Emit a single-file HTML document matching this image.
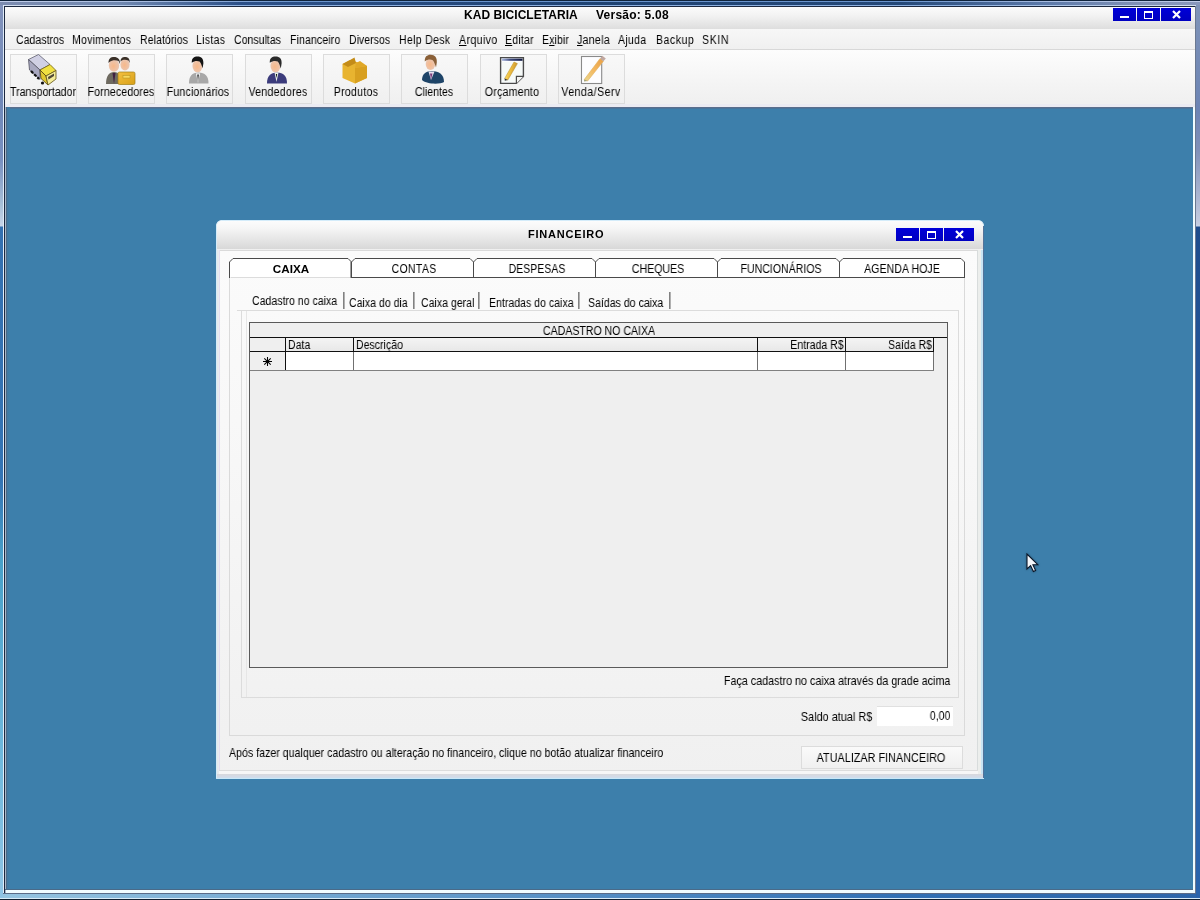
<!DOCTYPE html>
<html><head><meta charset="utf-8"><style>
html,body{margin:0;padding:0;}
body{width:1200px;height:900px;overflow:hidden;position:relative;background:#3d7fab;font-family:"Liberation Sans",sans-serif;}
.t{position:absolute;white-space:nowrap;line-height:1;will-change:transform;}
body{-webkit-font-smoothing:antialiased;}
</style></head><body>
<div style="position:absolute;left:0px;top:0px;width:3px;height:900px;background:linear-gradient(#8494bc 0px,#7088b8 100px,#7890c0 160px,#a8c0d8 205px,#c8d4e8 226px,#3470b0 227px,#3474b4 480px,#48a0c8 560px,#70b8dc 760px,#90c4e4 900px);"></div><div style="position:absolute;left:1196px;top:0px;width:4px;height:900px;background:linear-gradient(#8094b8 0px,#6c84b4 110px,#8090b8 150px,#c4cce0 224px,#c8d4e8 226px,#1e4c8c 227px,#2a5ea4 500px,#2a64ac 900px);"></div><div style="position:absolute;left:0px;top:0px;width:1200px;height:1px;background:#10243c;"></div><div style="position:absolute;left:0px;top:1px;width:1200px;height:1px;background:linear-gradient(90deg,#c0cce8 0px,#a8bce0 150px,#6a94cc 300px,#6a94cc 900px,#a8bce0 1050px,#c0cce8 1200px);"></div><div style="position:absolute;left:0px;top:2px;width:1200px;height:3px;background:linear-gradient(90deg,#7c8cb0 0px,#7088b0 120px,#2c5088 240px,#1e4272 600px,#244878 900px,#5a78a8 1040px,#8494b8 1150px,#8898bc 1200px);"></div><div style="position:absolute;left:3px;top:5px;width:1193px;height:1px;background:linear-gradient(90deg,#d4e0f0 0px,#8cb0e0 250px,#8cb0e0 950px,#d4e0f0 1200px);"></div><div style="position:absolute;left:3px;top:6px;width:1193px;height:1px;background:#1c2840;"></div><div style="position:absolute;left:3px;top:5px;width:1px;height:890px;background:#e0ecf8;"></div><div style="position:absolute;left:4px;top:6px;width:1px;height:889px;background:#1c2840;"></div><div style="position:absolute;left:1195px;top:6px;width:1px;height:889px;background:#6a7890;"></div><div style="position:absolute;left:3px;top:893px;width:1193px;height:1px;background:#5a6c88;"></div><div style="position:absolute;left:3px;top:894px;width:1193px;height:4px;background:linear-gradient(90deg,#94c4e0,#3070b4 900px,#2c66aa);"></div><div style="position:absolute;left:0px;top:898px;width:1200px;height:1px;background:#d8ecf8;"></div><div style="position:absolute;left:0px;top:899px;width:1200px;height:1px;background:#102030;"></div><div style="position:absolute;left:5px;top:7px;width:1190px;height:22px;background:linear-gradient(#fbfbfb 0%,#f2f2f2 40%,#dedede 100%);"></div><div class="t" style="left:464px;top:8.84px;font-size:12.00px;font-weight:bold;letter-spacing:0.040px;color:#000;">KAD BICICLETARIA</div><div class="t" style="left:596px;top:8.84px;font-size:12.00px;font-weight:bold;letter-spacing:0.230px;color:#000;">Versão: 5.08</div><div style="position:absolute;left:1113px;top:8px;width:23px;height:13px;background:linear-gradient(#0000d8,#0000c0);"></div><div style="position:absolute;left:1137px;top:8px;width:23px;height:13px;background:linear-gradient(#0000d8,#0000c0);"></div><div style="position:absolute;left:1161px;top:8px;width:30px;height:13px;background:linear-gradient(#0000d8,#0000c0);"></div><div style="position:absolute;left:1120px;top:16px;width:9px;height:2px;background:#fff;"></div><div style="position:absolute;left:1144px;top:11px;width:9px;height:8px;border:1px solid #fff;border-top-width:2px;box-sizing:border-box;"></div><svg style="position:absolute;left:1172px;top:10px" width="9" height="9" viewBox="0 0 9 9"><path d="M1 1L8 8M8 1L1 8" stroke="#fff" stroke-width="2.2"/></svg><div style="position:absolute;left:5px;top:29px;width:1190px;height:20px;background:linear-gradient(#f7f7f7,#f0f0f0);"></div><div style="position:absolute;left:5px;top:49px;width:1190px;height:1px;background:#d8d8d8;"></div><div class="t" style="left:15.7px;top:33.84px;font-size:12.00px;transform:scaleX(0.88);transform-origin:0 0;color:#000;">Cadastros</div><div class="t" style="left:71.7px;top:33.84px;font-size:12.00px;letter-spacing:0.250px;transform:scaleX(0.88);transform-origin:0 0;color:#000;">Movimentos</div><div class="t" style="left:139.7px;top:33.84px;font-size:12.00px;letter-spacing:0.057px;transform:scaleX(0.88);transform-origin:0 0;color:#000;">Relatórios</div><div class="t" style="left:195.7px;top:33.84px;font-size:12.00px;letter-spacing:0.341px;transform:scaleX(0.88);transform-origin:0 0;color:#000;">Listas</div><div class="t" style="left:233.7px;top:33.84px;font-size:12.00px;transform:scaleX(0.88);transform-origin:0 0;color:#000;">Consultas</div><div class="t" style="left:289.7px;top:33.84px;font-size:12.00px;letter-spacing:0.114px;transform:scaleX(0.88);transform-origin:0 0;color:#000;">Financeiro</div><div class="t" style="left:348.7px;top:33.84px;font-size:12.00px;transform:scaleX(0.88);transform-origin:0 0;color:#000;">Diversos</div><div class="t" style="left:398.7px;top:33.84px;font-size:12.00px;letter-spacing:0.341px;transform:scaleX(0.88);transform-origin:0 0;color:#000;">Help Desk</div><div class="t" style="left:458.7px;top:33.84px;font-size:12.00px;letter-spacing:0.455px;transform:scaleX(0.88);transform-origin:0 0;color:#000;"><u>A</u>rquivo</div><div class="t" style="left:504.7px;top:33.84px;font-size:12.00px;letter-spacing:0.227px;transform:scaleX(0.88);transform-origin:0 0;color:#000;"><u>E</u>ditar</div><div class="t" style="left:541.7px;top:33.84px;font-size:12.00px;letter-spacing:0.114px;transform:scaleX(0.88);transform-origin:0 0;color:#000;">E<u>x</u>ibir</div><div class="t" style="left:576.7px;top:33.84px;font-size:12.00px;letter-spacing:0.341px;transform:scaleX(0.88);transform-origin:0 0;color:#000;"><u>J</u>anela</div><div class="t" style="left:617.7px;top:33.84px;font-size:12.00px;letter-spacing:0.284px;transform:scaleX(0.88);transform-origin:0 0;color:#000;">Ajuda</div><div class="t" style="left:655.7px;top:33.84px;font-size:12.00px;letter-spacing:0.568px;transform:scaleX(0.88);transform-origin:0 0;color:#000;">Backup</div><div class="t" style="left:701.7px;top:33.84px;font-size:12.00px;letter-spacing:0.682px;transform:scaleX(0.88);transform-origin:0 0;color:#000;">SKIN</div><div style="position:absolute;left:5px;top:50px;width:1190px;height:57px;background:linear-gradient(#fdfdfd,#f4f4f4 60%,#efefef);"></div><div style="position:absolute;left:5px;top:104px;width:1190px;height:3px;background:#ebebf2;"></div><div style="position:absolute;left:5px;top:107px;width:1190px;height:1px;background:#5a6e8c;"></div><div style="position:absolute;left:5px;top:108px;width:1190px;height:1px;background:#48749a;"></div><div style="position:absolute;left:10px;top:54px;width:67px;height:50px;border:1px solid #dcdcdc;box-sizing:border-box;background:linear-gradient(#f8f8f8,#f0f0f0);"></div><div class="t" style="left:-257.25px;width:600px;text-align:center;top:86.34px;font-size:12.00px;letter-spacing:0.000px;transform:scaleX(0.88);transform-origin:50% 0;color:#000;">Transportador</div><div style="position:absolute;left:88px;top:54px;width:67px;height:50px;border:1px solid #dcdcdc;box-sizing:border-box;background:linear-gradient(#f8f8f8,#f0f0f0);"></div><div class="t" style="left:-178.93px;width:600px;text-align:center;top:86.34px;font-size:12.00px;letter-spacing:0.159px;transform:scaleX(0.88);transform-origin:50% 0;color:#000;">Fornecedores</div><div style="position:absolute;left:166px;top:54px;width:67px;height:50px;border:1px solid #dcdcdc;box-sizing:border-box;background:linear-gradient(#f8f8f8,#f0f0f0);"></div><div class="t" style="left:-101.71000000000001px;width:600px;text-align:center;top:86.34px;font-size:12.00px;letter-spacing:0.205px;transform:scaleX(0.88);transform-origin:50% 0;color:#000;">Funcionários</div><div style="position:absolute;left:245px;top:54px;width:67px;height:50px;border:1px solid #dcdcdc;box-sizing:border-box;background:linear-gradient(#f8f8f8,#f0f0f0);"></div><div class="t" style="left:-22.25999999999999px;width:600px;text-align:center;top:86.34px;font-size:12.00px;letter-spacing:0.318px;transform:scaleX(0.88);transform-origin:50% 0;color:#000;">Vendedores</div><div style="position:absolute;left:323px;top:54px;width:67px;height:50px;border:1px solid #dcdcdc;box-sizing:border-box;background:linear-gradient(#f8f8f8,#f0f0f0);"></div><div class="t" style="left:55.53499999999997px;width:600px;text-align:center;top:86.34px;font-size:12.00px;letter-spacing:0.307px;transform:scaleX(0.88);transform-origin:50% 0;color:#000;">Produtos</div><div style="position:absolute;left:401px;top:54px;width:67px;height:50px;border:1px solid #dcdcdc;box-sizing:border-box;background:linear-gradient(#f8f8f8,#f0f0f0);"></div><div class="t" style="left:134.0px;width:600px;text-align:center;top:86.34px;font-size:12.00px;letter-spacing:0.000px;transform:scaleX(0.88);transform-origin:50% 0;color:#000;">Clientes</div><div style="position:absolute;left:480px;top:54px;width:67px;height:50px;border:1px solid #dcdcdc;box-sizing:border-box;background:linear-gradient(#f8f8f8,#f0f0f0);"></div><div class="t" style="left:212.42499999999995px;width:600px;text-align:center;top:86.34px;font-size:12.00px;letter-spacing:0.284px;transform:scaleX(0.88);transform-origin:50% 0;color:#000;">Orçamento</div><div style="position:absolute;left:558px;top:54px;width:67px;height:50px;border:1px solid #dcdcdc;box-sizing:border-box;background:linear-gradient(#f8f8f8,#f0f0f0);"></div><div class="t" style="left:291.24px;width:600px;text-align:center;top:86.34px;font-size:12.00px;letter-spacing:0.545px;transform:scaleX(0.88);transform-origin:50% 0;color:#000;">Venda/Serv</div><svg style="position:absolute;left:0;top:0" width="640" height="107" viewBox="0 0 640 107">
<defs>
<radialGradient id="face" cx="0.45" cy="0.55" r="0.6"><stop offset="0" stop-color="#f8b888"/><stop offset="1" stop-color="#e8c8b8"/></radialGradient>
<linearGradient id="gold" x1="0" y1="0" x2="1" y2="1"><stop offset="0" stop-color="#f4c040"/><stop offset="1" stop-color="#d8a018"/></linearGradient>
<linearGradient id="pen" x1="0" y1="0" x2="1" y2="0"><stop offset="0" stop-color="#fff4a0"/><stop offset="0.5" stop-color="#f0c030"/><stop offset="1" stop-color="#c89020"/></linearGradient>
</defs>
<!-- truck -->
<path d="M28.5 59.5L38.5 54.5L50 64.5L40 70Z" fill="#d0d0e4" stroke="#606070" stroke-width="0.8"/>
<path d="M28.5 59.5L40 70L40 79.5L29.5 70Z" fill="#a8a8c0" stroke="#505060" stroke-width="0.8"/>
<path d="M31 71L39 79" stroke="#101010" stroke-width="2.2" stroke-dasharray="3 1.5"/>
<path d="M40 70L50 64.5L56 70.5L46 76Z" fill="#f0e040" stroke="#706010" stroke-width="0.8"/>
<path d="M40 70L46 76L48 85L41 78.5Z" fill="#e0c830" stroke="#504010" stroke-width="0.8"/>
<path d="M46 76L56 70.5L56 79L48 85Z" fill="#f4ec98" stroke="#605010" stroke-width="0.8"/>
<path d="M48 77L54 73.5L54 76L48.5 79.5Z" fill="#504838"/>
<circle cx="42.5" cy="83" r="1.6" fill="#101010"/>
<!-- fornecedores -->
<path d="M106 84C106 76 109 72 114 72C119 72 122 76 122 84Z" fill="#6e6a60"/>
<path d="M112.5 73L114 84L115.5 73Z" fill="#402040"/>
<ellipse cx="114" cy="65.5" rx="5.2" ry="6.2" fill="url(#face)"/>
<path d="M108.5 63C108.5 58 111 57 114 57C118 57 120 59 120 64L118.5 61C116 60 112 60 109.5 62Z" fill="#3a3028"/>
<ellipse cx="125" cy="64.5" rx="4.6" ry="6" fill="url(#face)"/>
<path d="M120.5 62C120.5 58 122.5 57 125 57C128.5 57 129.8 59 129.8 63L128.5 60.5C126 59.5 123 59.5 121 61Z" fill="#3a3028"/>
<rect x="118" y="72" width="17" height="12.5" rx="1.5" fill="url(#gold)" stroke="#a08018" stroke-width="0.7"/>
<rect x="123" y="75.5" width="7" height="2.5" fill="#f8d860" stroke="#b09020" stroke-width="0.5"/>
<!-- funcionarios -->
<path d="M189 83.5C189 76 192 72.5 198.5 72.5C205 72.5 208.5 76 208.5 83.5Z" fill="#a8a8a8"/>
<path d="M196 73.5L198 83L200 73.5Z" fill="#fff"/>
<path d="M197.3 74.5L198 82L198.8 74.5Z" fill="#101010"/>
<ellipse cx="197.5" cy="66" rx="5" ry="6.3" fill="url(#face)"/>
<path d="M191.8 62.8C191.5 58.3 194 56.6 197.5 56.6C201.6 56.6 203.6 59.2 203.4 63.2L202.6 68.2C201.8 66 201.2 63.4 199.6 61.6C197.2 60.6 194.2 61 191.8 62.8Z" fill="#141414"/>
<!-- vendedores -->
<path d="M267 83.5C267 76 270.5 72.5 277 72.5C283.5 72.5 287 76 287 83.5Z" fill="#3c3c7c"/>
<path d="M274.5 72.5L276.5 82L278.5 72.5Z" fill="#e8f0e8"/>
<path d="M275.8 74L276.5 78L277.2 74Z" fill="#101810"/>
<ellipse cx="275.5" cy="66" rx="5" ry="6.3" fill="url(#face)"/>
<path d="M269.8 62.8C269.5 58.3 272 56.6 275.5 56.6C279.8 56.6 282 59.2 281.6 63.6L280.8 68.6C280 66.2 279.4 63.4 277.8 61.6C275.4 60.6 272.4 61 269.8 62.8Z" fill="#2a2a2a"/>
<!-- produtos -->
<path d="M342.5 64L350 60L360 63L367 66L367 78L355 83.5L342.5 78Z" fill="#e8b430"/>
<path d="M355 68L367 66L367 78L355 83.5Z" fill="#d8a020"/>
<path d="M342.5 64L350 60L354.5 57.5L356 63L348 67Z" fill="#c48c18"/>
<path d="M356 63L360 61L367 66L355 68Z" fill="#e0a828"/>
<!-- clientes -->
<path d="M422 80C422 74 426 71 432 71C439 71 444 74.5 444 82C440 84.5 427 84.5 422 80Z" fill="#1e4468"/>
<path d="M428.5 71.5L431 80L434.5 71.5Z" fill="#e8e0f0"/>
<path d="M430 73.5L431 79.5L432.5 73.5Z" fill="#7a3a7a"/>
<ellipse cx="430.5" cy="64" rx="4.8" ry="6" fill="url(#face)"/>
<path d="M424.8 61.5C424.5 56.8 427 54.8 430.5 54.8C435 54.8 437.2 57.8 436.8 62.5L436 67.5C435.2 65 434.4 62 432.8 60.2C430.2 59 427.4 59.5 424.8 61.5Z" fill="#8a6038"/>
<!-- orcamento -->
<linearGradient id="hdr" x1="0" y1="0" x2="1" y2="0"><stop offset="0" stop-color="#a8b8e0"/><stop offset="0.4" stop-color="#404c80"/><stop offset="1" stop-color="#101840"/></linearGradient>
<linearGradient id="pen2" x1="0" y1="0" x2="1" y2="0.3"><stop offset="0" stop-color="#fff8c0"/><stop offset="0.45" stop-color="#f4c848"/><stop offset="1" stop-color="#c89028"/></linearGradient>
<path d="M500.6 57.6H523.4V76.4L516.4 83.4H500.6Z" fill="#fbfdff" stroke="#4a4a4a" stroke-width="1.4"/>
<path d="M502 62H522V75L516 82H502Z" fill="#f4f8f4" opacity="0.6"/>
<path d="M516.4 83.4V76.4H523.4" fill="#f4f4f4" stroke="#4a4a4a" stroke-width="1.2"/>
<rect x="502" y="58.6" width="20.5" height="2.2" fill="url(#hdr)"/>
<path d="M504.6 78.6L507.8 80L517.4 63.6L514 62Z" fill="url(#pen2)" stroke="#b88a20" stroke-width="0.5"/>
<path d="M504.6 78.6L504.8 80.8L507.8 80Z" fill="#303030"/>
<!-- venda/serv -->
<linearGradient id="pen3" x1="0" y1="1" x2="1" y2="0"><stop offset="0" stop-color="#e8d890"/><stop offset="0.5" stop-color="#f4b860"/><stop offset="1" stop-color="#e8a048"/></linearGradient>
<rect x="581.5" y="56.5" width="20.2" height="27" fill="#fdfdff" stroke="#8a8a8a" stroke-width="1.1"/>
<path d="M584.2 79.6L587.6 81L603.4 61.2L600 58.6Z" fill="url(#pen3)" stroke="#e0b060" stroke-width="0.6"/>
<path d="M584.2 79.6L584 81.6L587.6 81Z" fill="#a0a070"/>
<path d="M600 58.6L602.4 55.8L605.8 58.6L603.4 61.2Z" fill="#c0a8a0"/>
</svg>
<div style="position:absolute;left:5px;top:109px;width:1190px;height:784px;background:#3d7fab;"></div><div style="position:absolute;left:5px;top:107px;width:1px;height:786px;background:#a8b8c8;"></div><div style="position:absolute;left:6px;top:107px;width:1px;height:783px;background:#4a6a88;"></div><div style="position:absolute;left:7px;top:107px;width:3px;height:783px;background:linear-gradient(90deg,#4278a0,#3d7fab);"></div><div style="position:absolute;left:5px;top:889px;width:1188px;height:1px;background:#4a6a88;"></div><div style="position:absolute;left:6px;top:890px;width:1187px;height:3px;background:#f0fcff;"></div><div style="position:absolute;left:1193px;top:107px;width:2px;height:786px;background:#f0fcff;"></div><div style="position:absolute;left:216px;top:220px;width:768px;height:559px;border-radius:6px 6px 0 0;background:linear-gradient(#fbfbfb 30px,#f8f8f8 200px,#f3f3f3 420px,#f0f0f0 559px);overflow:hidden;"><div style="position:absolute;left:0;top:0;right:0;bottom:0;border:1px solid #d4ecfa;border-right-color:#c8e4f4;border-bottom-color:#d8ecf8;border-radius:6px 6px 0 0;"></div></div><div style="position:absolute;left:217px;top:221px;width:766px;height:28px;border-radius:5px 5px 0 0;background:linear-gradient(#fcfcfc 0%,#f6f6f6 25%,#e4e4e4 70%,#d8d8d8 100%);"></div><div style="position:absolute;left:217px;top:249px;width:766px;height:1px;background:#f0f0f0;"></div><div style="position:absolute;left:217px;top:250px;width:766px;height:1px;background:#dadada;"></div><div style="position:absolute;left:217px;top:250px;width:1px;height:528px;background:#e4eaec;"></div><div style="position:absolute;left:218px;top:250px;width:1px;height:528px;background:#e8ecf0;"></div><div style="position:absolute;left:219px;top:250px;width:1px;height:521px;background:#e2def0;"></div><div style="position:absolute;left:977px;top:250px;width:1px;height:521px;background:#d8dcdc;"></div><div style="position:absolute;left:978px;top:250px;width:3px;height:528px;background:#eceeec;"></div><div style="position:absolute;left:981px;top:250px;width:2px;height:528px;background:#c8e4f4;"></div><div style="position:absolute;left:983px;top:226px;width:1px;height:553px;background:#52729a;"></div><div style="position:absolute;left:219px;top:770px;width:759px;height:1px;background:#dcdcdc;"></div><div style="position:absolute;left:219px;top:771px;width:759px;height:3px;background:#f6f6f6;"></div><div style="position:absolute;left:217px;top:774px;width:766px;height:4px;background:linear-gradient(#d8d8dc,#d0dcec);"></div><div style="position:absolute;left:216px;top:778px;width:768px;height:1px;background:#c8e8f8;"></div><div class="t" style="left:527.5px;top:229.19px;font-size:11.00px;font-weight:bold;letter-spacing:0.790px;color:#000;">FINANCEIRO</div><div style="position:absolute;left:896px;top:228px;width:23px;height:13px;background:linear-gradient(#0000d8,#0000c0);"></div><div style="position:absolute;left:920px;top:228px;width:23px;height:13px;background:linear-gradient(#0000d8,#0000c0);"></div><div style="position:absolute;left:944px;top:228px;width:30px;height:13px;background:linear-gradient(#0000d8,#0000c0);"></div><div style="position:absolute;left:903px;top:236px;width:9px;height:2px;background:#fff;"></div><div style="position:absolute;left:927px;top:231px;width:9px;height:8px;border:1px solid #fff;border-top-width:2px;box-sizing:border-box;"></div><svg style="position:absolute;left:955px;top:230px" width="9" height="9" viewBox="0 0 9 9"><path d="M1 1L8 8M8 1L1 8" stroke="#fff" stroke-width="2.2"/></svg><div style="position:absolute;left:229px;top:277px;width:736px;height:459px;box-sizing:border-box;border:1px solid #dadada;border-top:none;"></div><svg style="position:absolute;left:229px;top:258px" width="737" height="21" viewBox="0 0 737 21"><path d="M0.5 20V4L4.0 0.5H119.0L122.5 4V20Z" fill="#ffffff" stroke="none"/><path d="M122.5 20V4L126.0 0.5H241.0L244.5 4V20Z" fill="#ffffff" stroke="none"/><path d="M244.5 20V4L248.0 0.5H363.0L366.5 4V20Z" fill="#ffffff" stroke="none"/><path d="M366.5 20V4L370.0 0.5H485.0L488.5 4V20Z" fill="#ffffff" stroke="none"/><path d="M488.5 20V4L492.0 0.5H607.0L610.5 4V20Z" fill="#ffffff" stroke="none"/><path d="M610.5 20V4L614.0 0.5H732.0L735.5 4V20Z" fill="#ffffff" stroke="none"/><path d="M0.5 20V4L4.0 0.5H119.0L122.5 4V20" fill="none" stroke="#4a4a4a" stroke-width="1"/><path d="M1.5 19.5H121.5" stroke="#dcdcdc" stroke-width="1"/><path d="M121.5 3V20" stroke="#a0a0a0" stroke-width="1"/><path d="M122.5 20V4L126.0 0.5H241.0L244.5 4V20" fill="none" stroke="#4a4a4a" stroke-width="1"/><path d="M122.0 19.5H245.0" stroke="#4a4a4a" stroke-width="1"/><path d="M244.5 20V4L248.0 0.5H363.0L366.5 4V20" fill="none" stroke="#4a4a4a" stroke-width="1"/><path d="M244.0 19.5H367.0" stroke="#4a4a4a" stroke-width="1"/><path d="M366.5 20V4L370.0 0.5H485.0L488.5 4V20" fill="none" stroke="#4a4a4a" stroke-width="1"/><path d="M366.0 19.5H489.0" stroke="#4a4a4a" stroke-width="1"/><path d="M488.5 20V4L492.0 0.5H607.0L610.5 4V20" fill="none" stroke="#4a4a4a" stroke-width="1"/><path d="M488.0 19.5H611.0" stroke="#4a4a4a" stroke-width="1"/><path d="M610.5 20V4L614.0 0.5H732.0L735.5 4V20" fill="none" stroke="#4a4a4a" stroke-width="1"/><path d="M610.0 19.5H736.0" stroke="#4a4a4a" stroke-width="1"/></svg><div class="t" style="left:-8.600000000000023px;width:600px;text-align:center;top:262.70px;font-size:11.70px;font-weight:bold;letter-spacing:0.000px;color:#000;">CAIXA</div><div class="t" style="left:113.54999999999995px;width:600px;text-align:center;top:263.24px;font-size:12.00px;letter-spacing:0.341px;transform:scaleX(0.88);transform-origin:50% 0;color:#000;">CONTAS</div><div class="t" style="left:236.70000000000005px;width:600px;text-align:center;top:263.24px;font-size:12.00px;letter-spacing:0.000px;transform:scaleX(0.88);transform-origin:50% 0;color:#000;">DESPESAS</div><div class="t" style="left:357.5px;width:600px;text-align:center;top:263.24px;font-size:12.00px;letter-spacing:0.000px;transform:scaleX(0.88);transform-origin:50% 0;color:#000;">CHEQUES</div><div class="t" style="left:480.79999999999995px;width:600px;text-align:center;top:263.24px;font-size:12.00px;letter-spacing:0.000px;transform:scaleX(0.88);transform-origin:50% 0;color:#000;">FUNCIONÁRIOS</div><div class="t" style="left:601.525px;width:600px;text-align:center;top:263.24px;font-size:12.00px;letter-spacing:0.057px;transform:scaleX(0.88);transform-origin:50% 0;color:#000;">AGENDA HOJE</div><div style="position:absolute;left:237px;top:310px;width:722px;height:1px;background:#dcdcdc;"></div><div class="t" style="left:252.0px;top:295.04px;font-size:12.00px;transform:scaleX(0.88);transform-origin:0 0;color:#000;">Cadastro no caixa</div><div style="position:absolute;left:343px;top:292px;width:2px;height:17px;background:linear-gradient(90deg,#6a6a6a,#c8c8c8);"></div><div class="t" style="left:349.0px;top:296.64px;font-size:12.00px;transform:scaleX(0.88);transform-origin:0 0;color:#000;">Caixa do dia</div><div style="position:absolute;left:413px;top:292px;width:2px;height:17px;background:linear-gradient(90deg,#6a6a6a,#c8c8c8);"></div><div class="t" style="left:420.5px;top:296.64px;font-size:12.00px;transform:scaleX(0.88);transform-origin:0 0;color:#000;">Caixa geral</div><div style="position:absolute;left:478px;top:292px;width:2px;height:17px;background:linear-gradient(90deg,#6a6a6a,#c8c8c8);"></div><div class="t" style="left:488.5px;top:296.64px;font-size:12.00px;transform:scaleX(0.88);transform-origin:0 0;color:#000;">Entradas do caixa</div><div style="position:absolute;left:578px;top:292px;width:2px;height:17px;background:linear-gradient(90deg,#6a6a6a,#c8c8c8);"></div><div class="t" style="left:588.0px;top:296.64px;font-size:12.00px;transform:scaleX(0.88);transform-origin:0 0;color:#000;">Saídas do caixa</div><div style="position:absolute;left:669px;top:292px;width:2px;height:17px;background:linear-gradient(90deg,#6a6a6a,#c8c8c8);"></div><div style="position:absolute;left:241px;top:310px;width:718px;height:388px;box-sizing:border-box;border:1px solid #dcdcdc;border-top:none;"></div><div style="position:absolute;left:246px;top:311px;width:1px;height:386px;background:#e6e6e6;"></div><div style="position:absolute;left:249px;top:322px;width:699px;height:346px;box-sizing:border-box;border:1px solid #5a5a5a;background:#efefef;"></div><div class="t" style="left:299px;width:600px;text-align:center;top:325.14px;font-size:12.00px;transform:scaleX(0.88);transform-origin:50% 0;color:#000;">CADASTRO NO CAIXA</div><div style="position:absolute;left:250px;top:337px;width:697px;height:1px;background:#101010;"></div><div style="position:absolute;left:250px;top:338px;width:683px;height:13px;background:#efefef;"></div><div style="position:absolute;left:286px;top:338px;width:647px;height:13px;background:linear-gradient(#f4f4f4,#e8e8e8);"></div><div style="position:absolute;left:250px;top:351px;width:684px;height:1px;background:#101010;"></div><div style="position:absolute;left:286px;top:352px;width:647px;height:18px;background:#ffffff;"></div><div style="position:absolute;left:250px;top:370px;width:684px;height:1px;background:#808080;"></div><div style="position:absolute;left:285px;top:338px;width:1px;height:32px;background:#101010;"></div><div style="position:absolute;left:353px;top:338px;width:1px;height:13px;background:#101010;"></div><div style="position:absolute;left:353px;top:352px;width:1px;height:18px;background:#707070;"></div><div style="position:absolute;left:757px;top:338px;width:1px;height:13px;background:#101010;"></div><div style="position:absolute;left:757px;top:352px;width:1px;height:18px;background:#707070;"></div><div style="position:absolute;left:845px;top:338px;width:1px;height:13px;background:#101010;"></div><div style="position:absolute;left:845px;top:352px;width:1px;height:18px;background:#707070;"></div><div style="position:absolute;left:933px;top:338px;width:1px;height:13px;background:#101010;"></div><div style="position:absolute;left:933px;top:352px;width:1px;height:18px;background:#707070;"></div><div class="t" style="left:288px;top:339.14px;font-size:12.00px;transform:scaleX(0.88);transform-origin:0 0;color:#000;">Data</div><div class="t" style="left:356px;top:339.14px;font-size:12.00px;transform:scaleX(0.88);transform-origin:0 0;color:#000;">Descrição</div><div class="t" style="right:356px;text-align:right;top:339.14px;font-size:12.00px;transform:scaleX(0.88);transform-origin:100% 0;color:#000;">Entrada R$</div><div class="t" style="right:268px;text-align:right;top:339.14px;font-size:12.00px;transform:scaleX(0.88);transform-origin:100% 0;color:#000;">Saída R$</div><svg style="position:absolute;left:262.5px;top:357px" width="9" height="9" viewBox="0 0 9 9"><path d="M4.5 0V9M0 4.5H9M1.3 1.3L7.7 7.7M7.7 1.3L1.3 7.7" stroke="#000" stroke-width="1.05"/></svg><div class="t" style="right:249.5px;text-align:right;top:674.96px;font-size:12.22px;transform:scaleX(0.88);transform-origin:100% 0;color:#000;">Faça cadastro no caixa através da grade acima</div><div class="t" style="right:327.5px;text-align:right;top:711.31px;font-size:12.40px;transform:scaleX(0.88);transform-origin:100% 0;color:#000;">Saldo atual R$</div><div style="position:absolute;left:877px;top:706px;width:76px;height:20px;background:#fff;border-top:1px solid #e0e0e0;box-sizing:border-box;"></div><div class="t" style="right:249.5px;text-align:right;top:710.14px;font-size:12.00px;transform:scaleX(0.88);transform-origin:100% 0;color:#000;">0,00</div><div class="t" style="left:228.5px;top:746.57px;font-size:12.09px;transform:scaleX(0.88);transform-origin:0 0;color:#000;">Após fazer qualquer cadastro ou alteração no financeiro, clique no botão atualizar financeiro</div><div style="position:absolute;left:801px;top:746px;width:162px;height:23px;box-sizing:border-box;border:1px solid #dcdcdc;background:linear-gradient(#fafafa,#f0f0f0);"></div><div class="t" style="left:581.4px;width:600px;text-align:center;top:752.05px;font-size:12.34px;transform:scaleX(0.88);transform-origin:50% 0;color:#000;">ATUALIZAR FINANCEIRO</div><svg style="position:absolute;left:1026px;top:552.7px;filter:drop-shadow(0.6px 0.8px 0.8px rgba(0,0,0,0.35))" width="14" height="20" viewBox="0 0 14 20"><path d="M1 1V16L4.6 12.6L7.4 18.6L9.6 17.6L6.9 11.7H11.8Z" fill="#f4f6fa" stroke="#0a1628" stroke-width="1.1" stroke-linejoin="miter"/></svg>
</body></html>
